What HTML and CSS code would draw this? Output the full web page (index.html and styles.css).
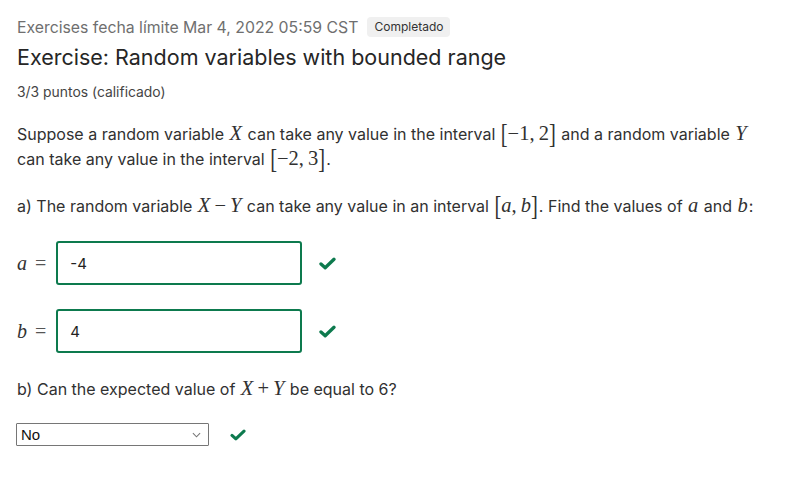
FILE: index.html
```html
<!DOCTYPE html>
<html lang="es">
<head>
<meta charset="utf-8">
<title>Exercise</title>
<link rel="stylesheet" href="styles.css">
</head>
<body>
<main class="page">
  <header class="head">
    <div class="meta">
      <span class="due">Exercises fecha límite Mar 4, 2022 05:59 CST</span>
      <span class="badge">Completado</span>
    </div>
    <h1 class="title">Exercise: Random variables with bounded range</h1>
    <div class="points">3/3 puntos (calificado)</div>
  </header>

  <section class="problem">
    <p class="para">Suppose a random variable <span class="m"><i>X</i></span> can take any value in the interval <span class="m"><span class="br">[</span>−1,&#8201;2<span class="br">]</span></span> and a random variable <span class="m"><i>Y</i></span> can take any value in the interval <span class="m"><span class="br">[</span>−2,&#8201;3<span class="br">]</span></span>.</p>

    <p class="para">a) The random variable <span class="m"><i>X</i><span class="op">−</span><i>Y</i></span> can take any value in an interval <span class="m"><span class="br">[</span><i>a</i>,&#8201;<i>b</i><span class="br">]</span></span>. Find the values of <span class="m"><i>a</i></span> and <span class="m"><i>b</i></span>:</p>

    <div class="answer">
      <span class="lbl m"><i>a</i><span class="eq">=</span></span>
      <div class="field">-4</div>
      <svg class="check" viewBox="0 0 18 14" width="17" height="13"><path d="M2 7.5 L6.5 11.5 L16 2.5" fill="none" stroke="#0d7a4e" stroke-width="3.6" stroke-linecap="round" stroke-linejoin="round"/></svg>
    </div>

    <div class="answer">
      <span class="lbl m"><i>b</i><span class="eq">=</span></span>
      <div class="field">4</div>
      <svg class="check" viewBox="0 0 18 14" width="17" height="13"><path d="M2 7.5 L6.5 11.5 L16 2.5" fill="none" stroke="#0d7a4e" stroke-width="3.6" stroke-linecap="round" stroke-linejoin="round"/></svg>
    </div>

    <p class="para partb">b) Can the expected value of <span class="m"><i>X</i><span class="op">+</span><i>Y</i></span> be equal to 6?</p>

    <div class="select-row">
      <div class="select">
        <span>No</span>
        <svg class="chev" viewBox="0 0 10 6" width="9" height="6"><path d="M1 1 L5 5 L9 1" fill="none" stroke="#777" stroke-width="1.2"/></svg>
      </div>
      <svg class="check" viewBox="0 0 18 14" width="16" height="12"><path d="M2 7.5 L6.5 11.5 L16 2.5" fill="none" stroke="#0d7a4e" stroke-width="3.6" stroke-linecap="round" stroke-linejoin="round"/></svg>
    </div>
  </section>
</main>
</body>
</html>
```

FILE: styles.css
```css
html, body {
  margin: 0;
  padding: 0;
  background: #fff;
}
body {
  font-family: Inter, "Noto Sans", sans-serif;
  color: #313131;
}
.page {
  padding: 16px 17px 0 17px;
}
.meta {
  display: flex;
  align-items: center;
  gap: 9px;
  height: 22px;
}
.due {
  font-size: 15.8px;
  color: #6f6f6f;
}
.badge {
  font-size: 12px;
  color: #333;
  background: #f0f0f0;
  border-radius: 4px;
  padding: 2px 7px 2px 7px;
  line-height: 16px;
}
.title {
  margin: 4px 0 0 0;
  font-size: 21.5px;
  font-weight: 400;
  color: #262626;
  line-height: 30px;
}
.points {
  margin-top: 10px;
  font-size: 13.9px;
  color: #454545;
  line-height: 20px;
}
.problem {
  margin-top: 20px;
}
.para {
  margin: 0 0 22px 0;
  font-size: 16px;
  line-height: 25px;
  color: #313131;
}
.m {
  font-family: "Liberation Serif", "DejaVu Serif", serif;
  font-size: 20.5px;
  line-height: 0;
  margin: 0 1px;
}
.m i {
  font-style: italic;
}
.op {
  margin: 0 4px;
}
.br {
  display: inline-block;
  line-height: 14px;
  font-weight: 300;
  transform: scaleY(1.3);
  transform-origin: 50% 40%;
}
.answer {
  display: flex;
  align-items: center;
  height: 44px;
  margin-bottom: 24px;
}
.lbl {
  margin: 0 10px 0 0;
  color: #333;
  line-height: 1;
}
.lbl.m {
  font-size: 20px;
}
.eq {
  color: #555;
  margin-left: 8px;
}
.field {
  box-sizing: border-box;
  width: 246px;
  height: 44px;
  border: 2px solid #0d7a4e;
  border-radius: 3px;
  padding: 0 12px;
  display: flex;
  align-items: center;
  font-size: 15px;
  color: #222;
}
.answer .check {
  margin-left: 17px;
}
.partb {
  margin-top: 0;
  margin-bottom: 21px;
}
.select-row {
  display: flex;
  align-items: center;
  gap: 21px;
}
.select {
  box-sizing: border-box;
  width: 193px;
  height: 23px;
  margin-left: -1px;
  border: 1px solid #767676;
  border-radius: 1px;
  display: flex;
  align-items: center;
  justify-content: space-between;
  padding: 0 7px 0 4px;
  font-family: "Liberation Sans", Arial, sans-serif;
  font-size: 15px;
  color: #111;
}
```
